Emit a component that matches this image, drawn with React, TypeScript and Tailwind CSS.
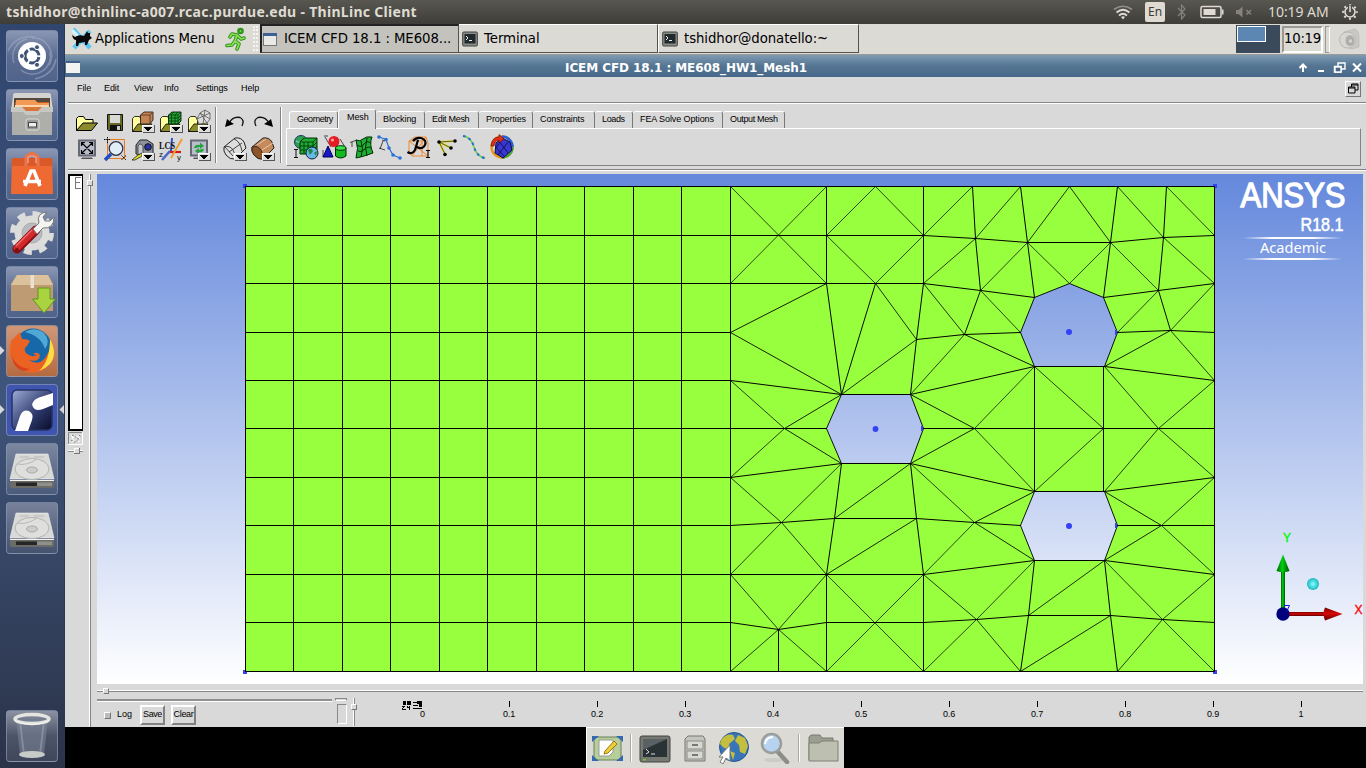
import React from "react";

type P = { children?: React.ReactNode };

/* ---------- mesh data, in window coordinates ---------- */
const XS = [293, 342, 390, 439, 487, 536, 584, 633, 681];
const YS = [235, 283, 332, 380, 428, 477, 525, 574, 622];
const EDGES: number[][] = [
  [730, 186, 730, 671],
  [730, 235, 923, 235], [923, 235, 975, 238, 1027, 242, 1110, 242, 1163, 237, 1214, 235],
  [730, 283, 923, 283, 980, 290, 1034, 297],
  [826, 186, 826, 283, 841, 394],
  [923, 186, 923, 283, 916, 339, 910, 394],
  [730, 186, 826, 283], [826, 186, 730, 283],
  [826, 235, 875, 186, 923, 235, 972, 186, 975, 238, 980, 290, 964, 334],
  [826, 235, 875, 283, 923, 235],
  [923, 283, 975, 238, 1020, 186, 1027, 242, 1069, 186, 1110, 242, 1117, 186, 1163, 237, 1166, 186, 1214, 235],
  [826, 283, 730, 332, 841, 394, 875, 283, 916, 339, 841, 394],
  [923, 283, 964, 334, 916, 339],
  [964, 334, 910, 394],
  [730, 380, 841, 394],
  [730, 380, 784, 428, 841, 394],
  [730, 428, 826, 428],
  [964, 334, 1020, 332, 980, 290, 1027, 242, 1034, 297],
  [964, 334, 1034, 366, 910, 394, 974, 428, 1034, 366, 1103, 428, 1034, 491, 974, 428, 910, 463],
  [923, 428, 1214, 428],
  [1027, 242, 1069, 283, 1110, 242, 1103, 297, 1158, 290, 1110, 242],
  [1163, 237, 1158, 290, 1214, 283, 1163, 237],
  [1158, 290, 1117, 332, 1170, 330, 1158, 290],
  [1214, 283, 1170, 330, 1214, 332],
  [1104, 366, 1170, 330, 1214, 380, 1104, 366, 1158, 428, 1214, 380],
  [1034, 366, 1034, 491], [1103, 366, 1103, 491],
  [1104, 491, 1158, 428, 1214, 477, 1104, 491, 1161, 525, 1214, 477],
  [1117, 525, 1214, 525],
  [1104, 560, 1161, 525, 1214, 574, 1104, 560, 1162, 619, 1214, 574],
  [1104, 560, 1110, 615, 1162, 619, 1214, 622],
  [1104, 560, 1028, 615, 1110, 615, 1020, 671, 1028, 615, 1034, 560],
  [1110, 615, 1117, 671, 1162, 619, 1214, 671],
  [1034, 560, 976, 619, 1028, 615],
  [976, 619, 1020, 671], [976, 619, 923, 574], [976, 619, 923, 622, 826, 622, 778, 629, 730, 622],
  [976, 619, 923, 671],
  [923, 574, 1034, 560, 974, 522, 1020, 525],
  [910, 463, 1034, 491, 974, 522, 910, 463],
  [730, 525, 781, 522, 834, 518, 916, 518, 974, 522, 923, 574],
  [784, 428, 841, 463, 730, 477, 784, 428],
  [730, 477, 781, 522, 841, 463, 834, 518, 826, 574, 781, 522, 730, 574],
  [834, 518, 910, 463, 916, 518, 923, 574],
  [916, 518, 826, 574],
  [730, 574, 923, 574],
  [730, 574, 778, 629, 826, 574],
  [730, 671, 778, 629, 826, 671], [778, 629, 778, 671],
  [826, 574, 826, 671, 923, 574, 923, 671, 826, 574],
];
const HOLES: number[][] = [
  [841, 394, 910, 394, 923, 428, 910, 463, 841, 463, 826, 428],
  [1069, 283, 1103, 297, 1117, 332, 1104, 366, 1034, 366, 1020, 332, 1034, 297],
  [1034, 491, 1104, 491, 1117, 525, 1104, 560, 1034, 560, 1020, 525],
];
const path = (p: number[]) => p.reduce((s, v, i) => s + (i % 2 ? " " : i ? "L" : "M") + (v + 0.5), "");
const holes = HOLES.map((h) => path(h) + "Z").join("");

/* Segments are stroked by the cosine of their slope, so each covers one pixel per step. */
type Seg = { a: number; b: number; c: number; d: number; w: number };
const SEGS: Seg[] = [...EDGES, ...HOLES.map((h) => [...h, h[0], h[1]])].flatMap((p) => {
  const out: Seg[] = [];
  for (let i = 0; i + 3 < p.length; i += 2) {
    const [a, b, c, d] = p.slice(i, i + 4);
    const w = Math.max(Math.abs(c - a), Math.abs(d - b)) / Math.hypot(c - a, d - b);
    out.push({ a: a + 0.5, b: b + 0.5, c: c + 0.5, d: d + 0.5, w });
  }
  return out;
});

function Viewport() {
  return (
    <svg className="block h-[510px] w-[1266px] shrink-0" viewBox="97 174 1266 510">
      <defs>
        <linearGradient id="sky" x1="0" y1="0" x2="0" y2="1">
          <stop offset="0" stopColor="#6488dc" /><stop offset="1" stopColor="#ffffff" />
        </linearGradient>
        <linearGradient id="fade"><stop offset="0" stopColor="#fff" stopOpacity="0" /><stop offset=".3" stopColor="#fff" /><stop offset=".7" stopColor="#fff" /><stop offset="1" stopColor="#fff" stopOpacity="0" /></linearGradient>
        <radialGradient id="ball"><stop offset="0" stopColor="#8ff" /><stop offset="1" stopColor="#18b8c0" /></radialGradient>
        <linearGradient id="gcone"><stop offset="0" stopColor="#006000" /><stop offset=".45" stopColor="#00d010" /><stop offset="1" stopColor="#005000" /></linearGradient>
        <linearGradient id="rcone" x1="0" y1="0" x2="0" y2="1"><stop offset="0" stopColor="#700000" /><stop offset=".45" stopColor="#d80808" /><stop offset="1" stopColor="#600000" /></linearGradient>
      </defs>
      <rect x="97" y="174" width="1266" height="510" fill="url(#sky)" />
      <g shapeRendering="crispEdges" stroke="#000" strokeWidth="1">
        <path d={"M245.5 186.5H1214.5V671.5H245.5Z" + holes} fill="#98ff3e" fillRule="evenodd" stroke="none" />
        <path fill="none" d={XS.map((x) => `M${x + 0.5} 186V671`).join("") + YS.map((y) => `M245 ${y + 0.5}H730`).join("")} />
        {SEGS.map((s, i) => <line key={i} x1={s.a} y1={s.b} x2={s.c} y2={s.d} strokeWidth={s.w} strokeLinecap="square" />)}
      </g>
      <path d="M245.5 186.5H1214.5V671.5H245.5Z" fill="none" stroke="#000" shapeRendering="crispEdges" />
      <g fill="#3442f5">
        <circle cx="875.5" cy="429" r="2.9" /><circle cx="1069" cy="332" r="3" /><circle cx="1069" cy="526" r="3" />
        <rect x="921" y="426" width="2" height="5" /><rect x="1115" y="330" width="2" height="5" /><rect x="1115" y="523" width="2" height="5" />
        <path d="M243 184H247V186H245V188H243ZM1213 184H1217V188H1215V186H1213ZM243 670H245V672H247V674H243ZM1215 670H1217V674H1213V672H1215Z" />
      </g>
      <g fill="#fff" stroke="#fff" fontFamily="'Liberation Sans', sans-serif">
        <text x="1240.500" y="206.500" fontSize="35.500" strokeWidth="1.300" textLength="105" lengthAdjust="spacingAndGlyphs">ANSYS</text>
        <text x="1300.500" y="230.500" fontSize="17.500" strokeWidth=".5" textLength="43" lengthAdjust="spacingAndGlyphs">R18.1</text>
        <text x="1260" y="253" fontSize="14" stroke="none" fontFamily="'Noto Sans', sans-serif" textLength="66" lengthAdjust="spacingAndGlyphs">Academic</text>
      </g>
      <rect x="1243" y="237" width="99" height="2" fill="url(#fade)" /><rect x="1243" y="258" width="99" height="2" fill="url(#fade)" />
      <rect x="1281" y="570" width="4" height="42" fill="url(#gcone)" />
      <path d="M1283 554.500L1289.500 571Q1283 573.500 1276.500 571Z" fill="url(#gcone)" />
      <rect x="1285" y="612" width="40" height="4" fill="url(#rcone)" />
      <path d="M1342.500 614L1325 607.500Q1322 614 1325 620.500Z" fill="url(#rcone)" />
      <circle cx="1283" cy="614" r="6.700" fill="#00007c" />
      <path d="M1284 605.500h5.500l-3 6" fill="none" stroke="#1414e8" />
      <circle cx="1313" cy="584" r="6" fill="url(#ball)" />
      <g fontFamily="'Liberation Sans', sans-serif" fontSize="12" strokeWidth=".4">
        <text x="1283" y="542" fill="#00f800" stroke="#00f800">Y</text>
        <text x="1354.500" y="613.500" fill="#ff0808" stroke="#ff0808">X</text>
      </g>
    </svg>
  );
}

/* ---------- launcher ---------- */
function Tile({ children, tone = "bg-linear-to-b from-[#8b97b3] via-[#5b6c92] to-[#50638a]" }: P & { tone?: string }) {
  return (
    <div className={"flex size-[52px] shrink-0 items-center justify-center overflow-hidden rounded-[4px] border border-[#8896b3]/70 " + tone}>
      <svg className="size-[50px]" viewBox="0 0 50 50">{children}</svg>
    </div>
  );
}

const Drive = () => (
  <>
    <path d="M9 10H41L47 35H3Z" fill="#d9d9d7" stroke="#eee" strokeWidth=".6" />
    <path d="M3 36H47V42Q47 44 45 44H5Q3 44 3 42Z" fill="#6b6b68" /><path d="M3 36.500H47" stroke="#f2f2f0" />
    <path d="M9 38.500H30V42H9Z" fill="#262626" /><path d="M30 38.500H45V42H30Z" fill="#8f8f8c" />
    <ellipse cx="25" cy="25" rx="17" ry="10.500" fill="#dfdfdd" stroke="#b4b4b2" /><ellipse cx="25" cy="26" rx="5.500" ry="3" fill="#ccc" stroke="#aaa" />
    <path d="M13 13H22M27 13H37M10 20Q20 22 30 15" stroke="#b9b9b7" fill="none" />
  </>
);

function Launcher() {
  return (
    <aside className="flex w-[65px] shrink-0 flex-col justify-between border-r border-[#2c3850] bg-linear-to-b from-[#30466f] via-[#3f557b] via-50% to-[#2b3349] pt-1.5 pb-1.5">
      <div className="flex flex-col items-center gap-[7px]">
        <Tile>
          <g fill="none" stroke="#a8b3cb" strokeWidth="1.500" opacity=".5"><path d="M25 7A18 18 0 0 1 42 34M43 21A18 18 0 0 1 14 39M7 32A18 18 0 0 1 20 8M1 20Q8 4 28 6M49 28Q46 44 28 48" /></g>
          <circle cx="25" cy="25" r="14" fill="#fff" />
          <circle cx="25" cy="25" r="7" fill="none" stroke="#3f5377" strokeWidth="3" strokeDasharray="12.700 2" strokeDashoffset="-1" />
          <g fill="#3f5377" stroke="#fff"><circle cx="14.800" cy="25" r="2.500" /><circle cx="30" cy="16.200" r="2.500" /><circle cx="30" cy="33.800" r="2.500" /></g>
        </Tile>
        <Tile>
          <path d="M8 3H42Q44 3 44 6L46 21H4L6 6Q6 3 8 3Z" fill="#d3d3d0" /><rect x="7" y="8" width="36" height="16" fill="#55493f" />
          <path d="M8 12H42V24H8Z" fill="#c95d20" /><path d="M9 10H28L31 13H42V16H9Z" fill="#f39a55" /><path d="M8 15H42V17H8Z" fill="#fbd5ad" /><path d="M8 17H42V24H8Z" fill="#d87737" />
          <path d="M5 18H14Q16 22 19 22H31Q34 22 36 18H45V45H5Z" fill="#aeaeab" /><path d="M4 17H15L19 21H31L35 17H46V22H34L31 25H19L16 22H4Z" fill="#c6c6c3" />
          <rect x="19" y="29" width="13" height="11" rx="2" fill="#9b9b98" stroke="#ddd" /><rect x="21.500" y="32.500" width="8" height="4.500" fill="#eee" stroke="#444" />
        </Tile>
        <Tile>
          <path d="M5 9H45L46 45H4Z" fill="#ef6a33" /><path d="M5 9H45L45.500 17H4.500Z" fill="#d95a28" />
          <path d="M19 17V8Q25 1 31 8V17" fill="none" stroke="#e8734c" strokeWidth="3" /><path d="M21 14V8Q25 6 29 8V14" fill="none" stroke="#f49a74" strokeWidth="1.500" />
          <path d="M18 37L24 22H27L33 37M16 32.500H34" fill="none" stroke="#fff" strokeWidth="3.600" />
        </Tile>
        <Tile>
          <circle cx="25" cy="25" r="17.500" fill="#dcdcda" /><circle cx="25" cy="25" r="19.500" fill="none" stroke="#dcdcda" strokeWidth="5" strokeDasharray="8 7.300" /><circle cx="25" cy="25" r="10" fill="#b8bbc2" stroke="#aaa" />
          <path d="M10 41L29 22" stroke="#8d0e12" strokeWidth="9" strokeLinecap="round" /><path d="M10 40L28 22" stroke="#d02a2c" strokeWidth="6.500" strokeLinecap="round" /><path d="M9 38L25 22" stroke="#f06c66" strokeWidth="1.500" />
          <path d="M26 21L32 15Q29 5 40 4L36 9L38 13L43 13L47 9Q47 21 36 20L30 26Z" fill="#f4f4f2" stroke="#777" /><circle cx="10" cy="42" r="2" fill="#711" />
        </Tile>
        <Tile>
          <path d="M10 8H41L46 17V44H4V17Z" fill="#c6a47c" /><path d="M10 8H41L46 18H4Z" fill="#dcc19d" /><path d="M4 18V44H46V18" fill="#b89469" opacity=".55" /><path d="M23.500 8H27V21H23.500Z" fill="#ece0ce" />
          <path d="M31 21H43V32H48.500L37 46L25.500 32H31Z" fill="#a9d43f" stroke="#5d961b" />
        </Tile>
        <Tile tone="bg-linear-to-b from-[#d09878] to-[#b56a40]">
          <circle cx="26" cy="21" r="18.500" fill="#1768a8" /><path d="M18 6Q27 0 37 7Q44 15 38 23Q34 10 18 6Z" fill="#69c4e8" opacity=".7" />
          <path d="M4 15L9 10L13 6L15 13Q21 13 23 15L20 20Q16 22 19 27Q24 32 30 29L26 28Q30 25 33 29Q32 37 22 34Q34 42 41 27Q45 21 43 13Q50 28 43 38Q34 49 20 46Q5 41 3 26Q3 20 4 15Z" fill="#ec6222" />
          <path d="M43 13Q51 28 43 38Q38 43 32 45Q43 35 43 13Z" fill="#ffdc41" /><path d="M4 28Q9 42 23 43Q14 48 7 38Z" fill="#d8411c" />
        </Tile>
        <Tile tone="bg-[#4055b0]">
          <defs><linearGradient id="thin" x1="0" y1="0" x2="1" y2="1"><stop offset="0" stopColor="#9cadd8" /><stop offset=".6" stopColor="#2c386a" /><stop offset="1" stopColor="#080c28" /></linearGradient></defs>
          <rect x="5" y="5" width="40" height="40" rx="5" fill="url(#thin)" stroke="#263262" strokeWidth="1.500" />
          <path d="M46 8L32 12.500Q24 16 25.500 21Q28 27 36 24L46 20ZM8 46L13 31Q16 24 22 26Q27 29 25 35L21 46Z" fill="#fff" />
        </Tile>
        <Tile tone="bg-linear-to-b from-[#7c879f] to-[#4a5b7b]"><Drive /></Tile>
        <Tile tone="bg-linear-to-b from-[#77819a] to-[#46536e]"><Drive /></Tile>
      </div>
      <div className="flex flex-col items-center">
        <Tile tone="bg-linear-to-b from-[#8c92a2] via-[#4c5468] to-[#40475c]">
          <path d="M9 9L13 43Q25 49 37 43L41 9Z" fill="#7d869a" opacity=".55" /><path d="M13 10L17 44M37 10L33 44" stroke="#b0b6c2" opacity=".4" strokeWidth="2" />
          <ellipse cx="25" cy="43.500" rx="13" ry="3.500" fill="#c9cbc8" /><ellipse cx="25" cy="8" rx="17" ry="4.500" fill="none" stroke="#e4e4e0" strokeWidth="3.500" /><path d="M8 10Q25 17 42 10" fill="none" stroke="#f4f4f0" />
        </Tile>
      </div>
    </aside>
  );
}

/* ---------- toolbar icons ---------- */
const Drop = () => (
  <g shapeRendering="crispEdges"><path d="M13 18H25V25H13Z" fill="#ddd" /><path d="M13 24V18H24" stroke="#fff" fill="none" /><path d="M14 25H25V18" stroke="#555" fill="none" /><path d="M15 20H23V21H22V22H21V23H20V24H18V23H17V22H16V21H15Z" fill="#000" /></g>
);
const Folder = () => (
  <g strokeWidth="1"><path d="M3.500 23.500V11.500L5.500 9.500H10.500L12.500 12.500H20V16" fill="#ffffa0" stroke="#000" /><path d="M3.500 23.500L10 16H24.500L18.500 23.500Z" fill="#8b8b2b" stroke="#000" /></g>
);
const SmallFolder = () => (
  <g><path d="M3.500 24.500V11.500L5.500 9.500H10.500L12.500 13V24.500Z" fill="#ffffa0" stroke="#000" strokeWidth=".8" /><path d="M3.500 24.500L9 17H23L18 24.500Z" fill="#8b8b2b" stroke="#000" strokeWidth=".8" /></g>
);
const Ic = ({ children }: P) => <svg className="size-7 shrink-0" viewBox="0 0 28 28">{children}</svg>;
const Monitor = () => (
  <g><rect x="5" y="4.500" width="18" height="17" fill="#666876" /><rect x="7" y="6.500" width="14" height="13" fill="#b9bcca" /><path d="M9 22.500H19L20 24H8Z" fill="#555" /></g>
);

function FileTools() {
  return (
    <div className="grid grid-cols-5 grid-rows-2 content-start self-start">
      <Ic><Folder /></Ic>
      <Ic><path d="M6.500 7.500H21.500V23.500H7.500L6.500 22.500Z" fill="#686827" stroke="#111" /><path d="M9 8H19V16H9Z" fill="#d8d8d8" /><path d="M9 18H20V24H9Z" fill="#111" /><path d="M16 19H19V23H16Z" fill="#ccc" /></Ic>
      <Ic><SmallFolder /><path d="M11.500 8L15 5H24V13L21 17H11.500Z" fill="#c48355" stroke="#111" strokeWidth=".8" /><path d="M11.500 8H21L24 5M21 8V17" fill="none" stroke="#6b3e20" /><Drop /></Ic>
      <Ic><SmallFolder /><path d="M11.500 8L15 5H24V14L21 17H11.500Z" fill="#27a83a" stroke="#000" strokeWidth=".8" /><path d="M11.500 8H21L24 5M21 8V17M14.500 8V17M18 8V17M11.500 11H21L24 8M11.500 14H21L24 11M14 8L17 5M18 8L21 5" fill="none" stroke="#002c00" strokeWidth=".7" /><Drop /></Ic>
      <Ic><SmallFolder /><path d="M12 12L15 6L20 3L25 6V12L22 16L14 17ZM12 12L25 6M15 6L22 16M20 3L18 17M25 12L15 6" fill="#ddd" stroke="#555" strokeWidth=".8" /><Drop /></Ic>
      <Ic><Monitor /><path d="M9 8L19 18M19 8L9 18M8.500 11V7.500H12M16 7.500H19.500V11M19.500 15V18.500H16M12 18.500H8.500V15" stroke="#000" strokeWidth="1.200" fill="none" /></Ic>
      <Ic><path d="M6.500 4.500H23.500V23.500H6.500Z" fill="none" stroke="#e87a20" /><path d="M3 4.500H9M6.500 2V8M20.500 20.500L25 25M25 20.500L20.500 25" stroke="#000" strokeDasharray="1.500 .8" /><path d="M4 25L10 19" stroke="#1e4dc8" strokeWidth="3.500" /><circle cx="15" cy="13.500" r="6.800" fill="#e1edf7" stroke="#334" strokeWidth="1.300" /></Ic>
      <Ic><path d="M7 19V10L11 5H18L24 9V20H14Z" fill="#8d9299" stroke="#222" /><path d="M9 18V11Q11 7 14 11V20" fill="#c3c8ce" stroke="#333" strokeWidth=".8" /><circle cx="19" cy="12" r="3.300" fill="#2833a6" stroke="#111" /><path d="M3 25L9 20L13 18V21L6 25Z" fill="#e4df25" stroke="#222" strokeWidth=".8" /><Drop /></Ic>
      <Ic><path d="M14 16L15 3" stroke="#2b54c8" strokeWidth="2" /><path d="M13 16L5 25" stroke="#4d65c8" strokeWidth="2.500" /><path d="M13 17H24" stroke="#d61919" strokeWidth="2.200" /><path d="M14 23L25 4" stroke="#ee9b2b" strokeWidth="1.800" /><text x="2" y="14" fontSize="9.500" textLength="16" lengthAdjust="spacingAndGlyphs" fontWeight="700" fontFamily="'Liberation Serif', serif" fill="#111">LCS</text><text x="20" y="25" fontSize="8" fontFamily="'Liberation Sans', sans-serif" fill="#111">y</text><text x="2" y="22" fontSize="8" fontFamily="'Liberation Sans', sans-serif" fill="#111">z</text></Ic>
      <Ic><Monitor /><path d="M9 13Q10 9 15 10V7.500L19 11L15 14V12Q12 12 12 13ZM19 14Q18 18 14 17V19.500L10 16L14 13V15Q16 15 16.500 14Z" fill="#25a33c" /><Drop /></Ic>
    </div>
  );
}

function EditTools() {
  return (
    <div className="grid grid-cols-2 grid-rows-2 content-start self-start">
      <Ic><path d="M21 19Q24 13 19 10.500Q12 9 8 16" fill="none" stroke="#111" strokeWidth="1.300" /><path d="M4 20L6 12L9 14.500L13 17Z" fill="#000" /></Ic>
      <Ic><path d="M7 19Q4 13 9 10.500Q16 9 20 16" fill="none" stroke="#111" strokeWidth="1.300" /><path d="M24 20L22 12L19 14.500L15 17Z" fill="#000" /></Ic>
      <Ic><path d="M3 12L14 3Q20 2 23 7L25 13L14 24Q9 25 5 20Q2 16 3 12Z" fill="#dedede" stroke="#222" /><path d="M3 12Q9 10 12 15Q15 20 14 24M8 17L21 8M4 12L12 21M13 4Q19 6 21 16" fill="none" stroke="#333" strokeWidth=".9" /><Drop /></Ic>
      <Ic><path d="M3 12L14 3Q20 2 23 7L25 13L14 24Q9 25 5 20Q2 16 3 12Z" fill="#c58a5c" stroke="#222" /><path d="M3 12Q9 10 12 15Q15 20 14 24Q9 25 5 20Q2 16 3 12Z" fill="#8d5429" stroke="#222" strokeWidth=".8" /><path d="M8 10L17 4M13 15L24 8" stroke="#ecc7a4" /><Drop /></Ic>
    </div>
  );
}

function MeshTools() {
  return (
    <div className="flex h-[35px] items-center pl-[5px]">
      <Ic><circle cx="9" cy="9" r="6.500" fill="#2f9e4d" stroke="#123a66" /><path d="M4 8Q9 12 13 4" stroke="#9bdcf0" fill="none" /><path d="M8 9L12 5H25V17L21 21H8Z" fill="#1fae35" stroke="#002b00" /><path d="M8 9H21L25 5M21 9V21M12 9V21M16 9V21M8 13H21L25 9M8 17H21L25 13" stroke="#002b00" strokeWidth=".8" fill="none" /><circle cx="20" cy="20" r="6" fill="#68b9e6" stroke="#124" /><path d="M16 17Q19 14 21 18L18 22ZM22 20L25 18L24 23Z" fill="#208740" /><path d="M2 16.500H6M4 16.500V24M2 24.500H6" stroke="#111" /></Ic>
      <Ic><path d="M5 4L11 14M4 3H8M20 6L25 14M3 17V24" stroke="#222" strokeWidth=".8" /><circle cx="14" cy="8.500" r="5.500" fill="#e41d25" /><circle cx="12.500" cy="7" r="1.600" fill="#ff9b98" /><path d="M3 24L8 13L13 24Z" fill="#1616ca" stroke="#000050" /><path d="M15.500 15V23Q20.500 27 26 23V15" fill="#13b91f" stroke="#002b00" /><ellipse cx="20.700" cy="15" rx="5.200" ry="2.300" fill="#36e34a" stroke="#002b00" /></Ic>
      <Ic><path d="M8 7Q12 9 15 6T24 4Q21 11 25 20Q19 22 16 23T8 25Q11 15 8 7Z" fill="#1fae35" stroke="#002b00" /><path d="M9 12Q13 15 16 11T22.500 10M10 18Q13 20 17 16T23.500 16M13 8Q16 15 13 24M19 5Q16 14 19 23" fill="none" stroke="#002b00" /><path d="M2 9.500L9 7M4 9V14" fill="none" stroke="#222" strokeWidth=".8" /></Ic>
      <Ic><path d="M3 4L10 6.500L13 15L17 22L24 25" fill="none" stroke="#2b6fd1" strokeWidth="1.200" /><g fill="#2a6fd8"><circle cx="3" cy="4" r="1.800" /><circle cx="10" cy="6.500" r="1.800" /><circle cx="13" cy="15" r="1.800" /><circle cx="17" cy="22" r="1.800" /><circle cx="24" cy="25" r="1.800" /></g><path d="M6 7L9 8M7 8L4 16M3 15L9 17" stroke="#222" strokeWidth=".8" fill="none" /></Ic>
      <Ic><path d="M5 8L11 4H22L24 10V23H8L5 18ZM5 8L24 23M22 4L8 23M5 8H18V23M18 8L22 4" fill="none" stroke="#ed8a35" strokeWidth="1" /><path d="M3.500 19Q8 22 11 17L14 7M9 8Q12 4 17 5Q23 7 21 12Q18 17 13 14" fill="none" stroke="#000" strokeWidth="2.200" /><path d="M22 17.500H26M24 17V24M22 24.500H26" stroke="#000" /></Ic>
      <Ic><path d="M7 9L23 8M7 9L19 15M7 9L13 21" stroke="#e4df25" strokeWidth="2" /><path d="M7 9L23 8M7 9L19 15M7 9L13 21" stroke="#222" strokeWidth=".7" /><g fill="#000"><circle cx="7" cy="9" r="1.800" /><circle cx="23" cy="8" r="1.800" /><circle cx="19" cy="15" r="1.800" /><circle cx="13" cy="21.500" r="1.800" /></g></Ic>
      <Ic><path d="M3 3Q11 4 14 14T25 25" fill="none" stroke="#6ec54b" strokeWidth="1.500" /><path d="M3 3Q11 4 14 14T25 25" fill="none" stroke="#1970d6" strokeWidth="2" strokeDasharray="2.500 3.500" /></Ic>
      <Ic><circle cx="14" cy="14" r="10.500" fill="none" stroke="#e4981b" strokeWidth="2.500" /><path d="M14 3.500A10.500 10.500 0 0 1 24.500 14" fill="none" stroke="#255fe0" strokeWidth="2.500" /><path d="M24.500 14A10.500 10.500 0 0 1 14 24.500" fill="none" stroke="#45a33a" strokeWidth="2.500" /><path d="M14 5L22 9L24 17L15 25L7 20L8 10Z" fill="#3a36d0" stroke="#090943" /><path d="M11 8L20 20M7.500 14L16 23M20 9L10 22M15 5L8 15" stroke="#090943" strokeWidth=".8" /><path d="M3 13Q4 4 11 4V1.500L16 6L11 10V7Q7 7 6 13Z" fill="#e92b19" stroke="#611" strokeWidth=".7" /></Ic>
    </div>
  );
}

/* ---------- chrome ---------- */
function TopBar() {
  return (
    <header className="flex h-6 shrink-0 items-center justify-between bg-linear-to-b from-[#585750] to-[#3e3d38] pr-2 pl-[6px] text-[#dfdbd2]">
      <span className="font-['Noto_Sans','Liberation_Sans',sans-serif] text-[14px] leading-[22px] font-bold whitespace-nowrap tracking-[0.3px] pb-px">tshidhor@thinlinc-a007.rcac.purdue.edu - ThinLinc Client</span>
      <div className="flex items-center">
        <svg className="mr-[12px] h-4 w-5" viewBox="0 0 20 16" fill="none" stroke="#dfdbd2" strokeWidth="1.700"><path d="M1 5.500Q10-1 19 5.500" opacity=".45" /><path d="M3.500 8.500Q10 3 16.500 8.500M6 11.500Q10 8 14 11.500" /><path d="M8 13L10 15.500L12 13Q10 11.500 8 13Z" fill="#dfdbd2" stroke="none" /></svg>
        <span className="mr-3 flex h-5 w-5 items-center justify-center rounded-[2px] bg-[#dfdbd2] font-['Noto_Sans',sans-serif] text-xs text-[#3c3b37]">En</span>
        <svg className="mr-[14px] h-4 w-[9px]" viewBox="0 0 9 16" fill="none" stroke="#85837b" strokeWidth="1.200"><path d="M1 4L8 11L4.500 15V1L8 5L1 12" /></svg>
        <svg className="mr-[11px] h-4 w-6" viewBox="0 0 24 16"><rect x="1" y="2.500" width="20" height="11" rx="1.500" fill="none" stroke="#dfdbd2" strokeWidth="1.500" /><rect x="3.500" y="5" width="12" height="6" fill="#dfdbd2" /><path d="M22 5.500H23.500V10.500H22Z" fill="#dfdbd2" /></svg>
        <svg className="mr-[15px] h-4 w-[18px]" viewBox="0 0 18 16"><path d="M1 6H3.500L7.500 2.500V13.500L3.500 10H1Z" fill="#85837b" /><path d="M11.500 6L16 10.500M16 6L11.500 10.500" stroke="#85837b" strokeWidth="1.500" /></svg>
        <span className="mr-[13px] w-[61px] pb-px font-['Noto_Sans',sans-serif] text-[14px] leading-[22px] tracking-[-0.05px] whitespace-nowrap">10:19 AM</span>
        <svg className="size-4" viewBox="0 0 16 16"><circle cx="8" cy="8" r="5" fill="none" stroke="#dfdbd2" strokeWidth="1.600" /><circle cx="8" cy="8" r="6.800" fill="none" stroke="#dfdbd2" strokeWidth="2" strokeDasharray="2 3.340" strokeDashoffset="1" /><path d="M6 1H10V6H6Z" fill="#4a4943" /><path d="M8 1.500V8" stroke="#dfdbd2" strokeWidth="1.600" /></svg>
      </div>
    </header>
  );
}

const task = "flex h-[29px] items-center border-r border-b border-r-[#55534e] border-b-[#55534e] font-['DejaVu_Sans',sans-serif] text-[13.3px] tracking-[-0.08px] whitespace-nowrap text-black";
const TermIcon = () => (
  <svg className="mr-[6px] size-4" viewBox="0 0 16 16"><rect x=".7" y="1" width="14.600" height="14" rx="1" fill="#8b8d88" stroke="#3f423e" /><rect x="2.500" y="3" width="11" height="9.500" fill="#20292b" /><path d="M4 5L6 7L4 9M7 9.500H10" stroke="#eee" fill="none" /></svg>
);

function XfcePanel() {
  return (
    <div className="flex h-[31px] shrink-0 items-start border-b border-[#9c9a94] bg-[#dcdad5]">
      <div className="flex h-[29px] w-[195px] items-center pl-[5px] font-['DejaVu_Sans',sans-serif] text-[13.3px] tracking-[-0.15px] whitespace-nowrap text-black">
        <svg className="mr-[2px] h-[23px] w-[23px]" viewBox="0 0 23 23"><path d="M3 2L20 21M20 4L4 21" stroke="#5ac7ee" strokeWidth="4.500" /><path d="M2 3L8 9" stroke="#d9f4ff" strokeWidth="3" /><path d="M2 8L5 10Q9 7 14 9L16 6L17 4L18 6H20L20 9L22 11L19 13L17 18H15V15L9 16L8 19H6L6 13Q3 13 2 8Z" fill="#0a0a0a" /></svg>
        <span className="w-[130px]">Applications Menu</span>
        <svg className="h-6 w-[22px] shrink-0" viewBox="0 0 22 24" fill="none" stroke="#2f9417" strokeWidth="3.600" strokeLinecap="round" strokeLinejoin="round"><circle cx="15.500" cy="4" r="1.500" /><path d="M5 10L7 7L12 8L10 14L14 17L12 22M10 14L7 18L2 18.500M13 9L16 12L19 11" /><path d="M5 10L7 7L12 8L10 14L14 17L12 22M10 14L7 18L2 18.500M13 9L16 12L19 11M15.500 4H15.600" stroke="#8be05a" strokeWidth="1.700" /></svg>
        <span className="ml-[6px] h-[25px] w-[5px] border-x-2 border-dotted border-[#f6f5f2]" />
      </div>
      <div className="flex h-[30px]">
        <div className={task + " w-[199px] border-t-2 border-l-2 border-t-[#222] border-l-[#222] bg-[#c4c2bd] pl-px"}>
          <svg className="mr-[7px] h-[13px] w-[14px] shrink-0" viewBox="0 0 14 13"><rect x=".5" y=".5" width="13" height="12" fill="#e9e9e7" stroke="#777" /><rect x="0" y="0" width="14" height="3" fill="#3c5f95" /></svg>
          ICEM CFD 18.1 : ME608...
        </div>
        <div className={task + " w-[199px] border-t border-t-white pl-[3px]"}><TermIcon />Terminal</div>
        <div className={task + " w-[201px] border-t border-l border-t-white border-l-white pl-[3px]"}><TermIcon />tshidhor@donatello:~</div>
      </div>
      <div className="ml-auto flex h-[29px] items-center pr-[6px] pt-px">
        <div className="h-7 w-11 bg-[#3a4a5b]"><div className="ml-px mt-px h-4 w-[29px] border border-white bg-[#5c87b2]" /></div>
        <div className="ml-[2px] flex h-[27px] w-[41px] items-center justify-center border-2 border-[#9a988f] border-r-white border-b-white font-['DejaVu_Sans',sans-serif] text-[13.3px] tracking-[-0.3px] text-black">10:19</div>
        <div className="ml-[2px] h-[27px] w-[5px] border border-[#9a988f] border-r-white" />
        <svg className="ml-[8px] size-[22px]" viewBox="0 0 22 22"><path d="M6 4L17 1Q21 3 21 10V19L14 21L5 18Z" fill="#c9c8c4" stroke="#b5b4b0" strokeWidth=".6" /><ellipse cx="9.500" cy="12" rx="8" ry="8" fill="#d8d7d3" stroke="#b0afab" strokeWidth=".8" /><ellipse cx="12" cy="12.500" rx="4.500" ry="5.500" fill="#b0afac" /><circle cx="12.500" cy="13" r="2.300" fill="#d4d3d0" stroke="#999" strokeWidth=".6" /></svg>
      </div>
    </div>
  );
}

function TitleBar() {
  return (
    <div className="flex h-[22px] shrink-0 items-center bg-linear-to-b from-[#7f9ab3] via-[#547592] via-50% to-[#48688a] pr-1 text-white">
      <svg className="mt-px ml-px h-[12px] w-[14px]" viewBox="0 0 14 12"><path d="M0 0H14V12H0Z" fill="#f2f2f0" /><path d="M0 0H14V2H0Z" fill="#41618b" /></svg>
      <div className="ml-[485px] w-[242px] pt-[4px] font-['DejaVu_Sans',sans-serif] text-[12px] leading-[18px] font-bold tracking-[-0.08px] whitespace-nowrap">ICEM CFD 18.1 : ME608_HW1_Mesh1</div>
      <svg className="mt-px ml-auto h-[14px] w-[66px]" viewBox="0 0 66 14" fill="none" stroke="#fff" strokeWidth="2"><path d="M7 12V5M3.500 8L7 4.500L10.500 8" /><path d="M22 11H28" /><path d="M42 3H49V9H42ZM38.500 6.500H45V12H38.500Z" strokeWidth="1.400" /><rect x="39" y="7" width="6" height="5" fill="#48688a" strokeWidth="1.400" /><path d="M57 3.500L65 11.500M65 3.500L57 11.500" /></svg>
    </div>
  );
}

const Groove = () => <div className="h-0.5 border-t border-b border-t-[#848484] border-b-white" />;
const tiny = "font-['Liberation_Sans',sans-serif] text-[9px] tracking-[-0.1px] text-black whitespace-nowrap ";

function MenuBar() {
  return (
    <div className={tiny + "flex h-[25px] items-center pr-[5px] pl-[12px]"}>
      <div className="flex pb-[2px]"><span className="w-[27px]">File</span><span className="w-[30px]">Edit</span><span className="w-[30px]">View</span><span className="w-[32px]">Info</span><span className="w-[45px]">Settings</span><span>Help</span></div>
      <div className="mb-[2px] ml-auto flex size-4 items-center justify-center border border-white border-r-[#777] border-b-[#777]">
        <svg className="size-[11px]" viewBox="0 0 11 11" fill="#d9d9d9" stroke="#000"><path d="M3.500 1H10V7H3.500ZM3.500 2H10" /><path d="M.5 4H7V10H.5ZM.5 5H7" /></svg>
      </div>
    </div>
  );
}

const tab = "h-[17px] border-t border-r border-t-white border-r-[#777] pl-[7px] leading-[14px] rounded-t-[3px] ";
function Tabs() {
  return (
    <div className={tiny + "flex h-[21px] items-end"}>
      <div className={tab + "ml-[3px] w-[49px] border-l border-l-white pl-[5px] tracking-[-0.45px]"}>Geometry</div>
      <div className={tab + "relative top-px h-[20px] w-[38px] border-l border-l-white bg-[#d9d9d9] pl-[8px]"}>Mesh</div>
      <div className={tab + "w-[49px]"}>Blocking</div>
      <div className={tab + "w-[54px] tracking-[-0.3px]"}>Edit Mesh</div>
      <div className={tab + "w-[54px]"}>Properties</div>
      <div className={tab + "w-[62px]"}>Constraints</div>
      <div className={tab + "w-[38px] pl-[5px] tracking-[-0.35px]"}>Loads</div>
      <div className={tab + "w-[90px]"}>FEA Solve Options</div>
      <div className={tab + "w-[62px] pl-[4px] tracking-[-0.35px]"}>Output Mesh</div>
    </div>
  );
}

const TICKS = ["0.1", "0.2", "0.3", "0.4", "0.5", "0.6", "0.7", "0.8", "0.9", "1"];
function BottomPane() {
  return (
    <div className={tiny + "flex h-[35px] overflow-hidden"}>
      <div className="w-[235px]">
        <div className="mt-[7px] h-[3px] border-t-2 border-b border-t-[#909090] border-b-white" />
        <div className="flex items-center pt-[3px] pl-[7px]">
          <div className="size-[7px] border border-white border-r-[#777] border-b-[#777] bg-[#bbb]" />
          <span className="ml-[6px] w-[23px] tracking-normal">Log</span>
          <div className="flex h-5 w-[25px] items-center justify-center border-2 border-white border-r-[#808080] border-b-[#808080] tracking-[-0.4px]">Save</div>
          <div className="ml-[6px] flex h-5 w-[25px] items-center justify-center border-2 border-white border-r-[#808080] border-b-[#808080] tracking-[-0.3px]">Clear</div>
        </div>
      </div>
      <div className="w-[15px] pt-[6px] pl-[3px]">
        <div className="h-[3px] w-[12px] border border-[#888] border-b-white" />
        <div className="mt-[3px] ml-[2px] h-[20px] w-[10px] border border-[#888] border-r-white border-b-white" />
      </div>
      <div className="ml-[4px] flex w-[6px] flex-col items-center pt-[6px]">
        <div className="h-[6px] w-0.5 border-l border-l-white bg-[#888]" />
        <div className="size-[6px] border border-white border-r-[#777] border-b-[#777]" />
        <div className="h-4 w-0.5 border-l border-l-white bg-[#888]" />
      </div>
      <div className="ml-[45px] w-[63px] pt-[9px]">
        <svg className="block h-[10px] w-[20px]" viewBox="0 0 20 10" shapeRendering="crispEdges"><path d="M1 0H4V4H1ZM0 5H3V6H2V7H1V8H4V9H0V7H1V6H0ZM5 0H9V4H5ZM5 5H6V6H7V5H8V9H7V7H5ZM11 1H16V2H11ZM11 4H16V5H11ZM11 7H20V8H11ZM15 0H20V6H17V3H15Z" fill="#000" /></svg>
        <div className="-mt-[2px] ml-[18px] leading-[10px]">0</div>
      </div>
      <div className="flex pt-[9px]">
        {TICKS.map((t) => (
          <div key={t} className="flex w-[88px] flex-col items-center">
            <div className="h-[6px] w-px bg-black" /><span className="pt-px leading-[12px]">{t}</span>
          </div>
        ))}
      </div>
    </div>
  );
}

function IcemWindow() {
  return (
    <div className="flex h-[650px] shrink-0 flex-col overflow-hidden bg-[#d9d9d9]">
      <MenuBar />
      <div className="ml-[3px]"><Groove /></div>
      <div className="flex h-[65px] shrink-0 pt-[3px] pl-[8px]">
        <FileTools />
        <div className="mr-[4px] ml-[2px] h-[56px] w-0.5 border-l border-r border-l-[#848484] border-r-white" />
        <EditTools />
        <div className="ml-[3px] h-[56px] w-0.5 border-l border-r border-l-[#848484] border-r-white" />
        <div className="ml-[4px] w-[1075px]">
          <Tabs />
          <div className="h-[38px] border border-white border-r-[#848484] border-b-[#848484]"><MeshTools /></div>
        </div>
      </div>
      <div className="ml-[3px]"><Groove /></div>
      <div className="flex min-h-0 flex-1">
        <div className="flex w-[21px] shrink-0 flex-col items-start pt-[3px] pl-[3px]">
          <div className="h-[257px] w-[15px] border-2 border-r border-black bg-white">
            <svg className="h-4 w-3" viewBox="0 0 12 16" fill="none" stroke="#777" shapeRendering="crispEdges"><path d="M10.500 1.500H5.500V12.500H10.500M6 6.500H10" /></svg>
          </div>
          <svg className="mt-px h-[13px] w-[15px]" viewBox="0 0 15 13"><path d="M.5 12V.5H14" fill="none" stroke="#888" /><path d="M14.500 0V12.500H0" fill="none" stroke="#fff" /><path d="M4 4L12 6L5 10ZM3 3L6 6M3 10L6 7M12 3L9 5M12 10L9 8" stroke="#fff" fill="none" /><path d="M4 3L11 7L5 11M11 3L13 5M3 9L5 8" fill="none" stroke="#777" strokeDasharray="2 1" /></svg>
          <svg className="mt-[3px] h-[7px] w-[15px]" viewBox="0 0 15 7" shapeRendering="crispEdges"><path d="M0 3H15V4H0Z" fill="#888" /><path d="M0 2H15V3H0Z" fill="#fff" /><path d="M6 0H12V6H6Z" fill="#777" /><path d="M6 0H11V5H6Z" fill="#fff" /><path d="M7 1H11V5H7Z" fill="#d9d9d9" /></svg>
        </div>
        <div className="flex w-[8px] shrink-0 flex-col items-center pt-[3px]">
          <div className="h-[6px] w-0.5 border-l border-l-white bg-[#848484]" />
          <div className="size-[6px] shrink-0 border border-white border-r-[#777] border-b-[#777]" />
          <div className="w-0.5 flex-1 border-l border-l-white bg-[#848484]" />
        </div>
        <div className="flex w-[1269px] flex-col pt-[3px] pl-[3px]">
          <Viewport />
          <div className="flex h-[8px] w-[1266px] items-end">
            <div className="h-0.5 w-[6px] border-t border-t-white bg-[#848484]" />
            <div className="-mb-0.5 size-[6px] shrink-0 border border-white border-r-[#777] border-b-[#777]" />
            <div className="h-0.5 flex-1 border-t border-t-white bg-[#848484]" />
          </div>
          <BottomPane />
        </div>
      </div>
    </div>
  );
}

const Big = ({ children }: P) => <svg className="size-8 shrink-0" viewBox="0 0 32 32">{children}</svg>;
const Sep = () => <div className="h-7 w-0.5 border-l border-r border-l-[#aaa89f] border-r-white" />;
function Dock() {
  return (
    <div className="flex flex-1 bg-black pl-[521px]">
      <div className="flex w-[258px] items-center border-t border-l border-white bg-[#dcdad5] pl-[4px]">
        <Big><rect x="3" y="5" width="27" height="23" rx="2" fill="#b6cf9a" stroke="#66805a" /><path d="M1 4H8L1 10ZM25 4H32V10ZM1 23V29H8ZM32 23V29H25Z" fill="#3469ad" /><path d="M8 8H22V20L18 24H8Z" fill="#fff" stroke="#999" /><path d="M14 19L23 9L26 12L17 21L13 22Z" fill="#f1cd35" stroke="#9a7a15" /></Big>
        <div className="mx-[7px]"><Sep /></div>
        <Big><rect x="1" y="4" width="30" height="26" rx="2" fill="#767872" stroke="#444" /><rect x="4" y="7" width="24" height="18" fill="#293234" /><path d="M4 7H28L4 18Z" fill="#596164" /><path d="M7 17L10 20L7 22M12 22H16" stroke="#ddd" fill="none" /><rect x="4" y="27" width="3" height="1.500" fill="#78c437" /></Big>
        <div className="ml-[8px]"><Big><path d="M6 7L9 4H24L26 7V29H6Z" fill="#c4c5bd" stroke="#777971" /><rect x="8" y="9" width="16" height="8" fill="#d7d8d1" stroke="#8c8d87" /><rect x="8" y="19" width="16" height="8" fill="#d7d8d1" stroke="#8c8d87" /><path d="M13 12H19V14H13ZM13 22H19V24H13Z" fill="#777" /></Big></div>
        <div className="ml-[8px]"><Big><circle cx="15" cy="15" r="14.500" fill="#3774b8" stroke="#28578f" /><path d="M2 8Q8 1 14 3L16 7L10 12L11 17L5 16L1 12ZM19 3L26 6L29 14L26 22L21 20L20 13L16 9ZM11 19L16 21L14 28Z" fill="#c3be3d" /><path d="M11 13V29L7 26L4 32L1 30L4 25H0Z" fill="#fff" stroke="#777" /></Big></div>
        <div className="ml-[8px]"><Big><ellipse cx="15" cy="28" rx="10" ry="2" fill="#bbb" opacity=".5" /><path d="M19 20L28 30" stroke="#8b8d89" strokeWidth="4.500" strokeLinecap="round" /><circle cx="12.500" cy="11.500" r="9.500" fill="#b8d3ef" stroke="#9b9d9a" strokeWidth="2.500" /><path d="M6 12Q7 5 14 5" stroke="#fff" strokeWidth="2" fill="none" /></Big></div>
        <div className="mx-[7px]"><Sep /></div>
        <Big><path d="M2 28V5L4 3H13L15 6H26V12" fill="#9b9e90" stroke="#777b6d" /><path d="M2 29V11H12L15 9H31V29Z" fill="#bdc0b1" stroke="#7d8174" /></Big>
      </div>
    </div>
  );
}

export default function App() {
  return (
    <div className="flex h-[768px] w-[1366px] flex-col overflow-hidden bg-black">
      <TopBar />
      <div className="flex min-h-0 flex-1">
        <div className="relative flex">
          <Launcher />
          <svg className="absolute top-0 left-0 h-full w-[65px]" viewBox="0 24 65 744" fill="#d6d8dc"><path d="M0 346V355L4.500 350.500ZM0 405V414L4.500 409.500ZM64 405V414L59.500 409.500Z" /></svg>
        </div>
        <div className="flex w-[1301px] flex-col">
          <XfcePanel />
          <TitleBar />
          <IcemWindow />
          <Dock />
        </div>
      </div>
    </div>
  );
}
